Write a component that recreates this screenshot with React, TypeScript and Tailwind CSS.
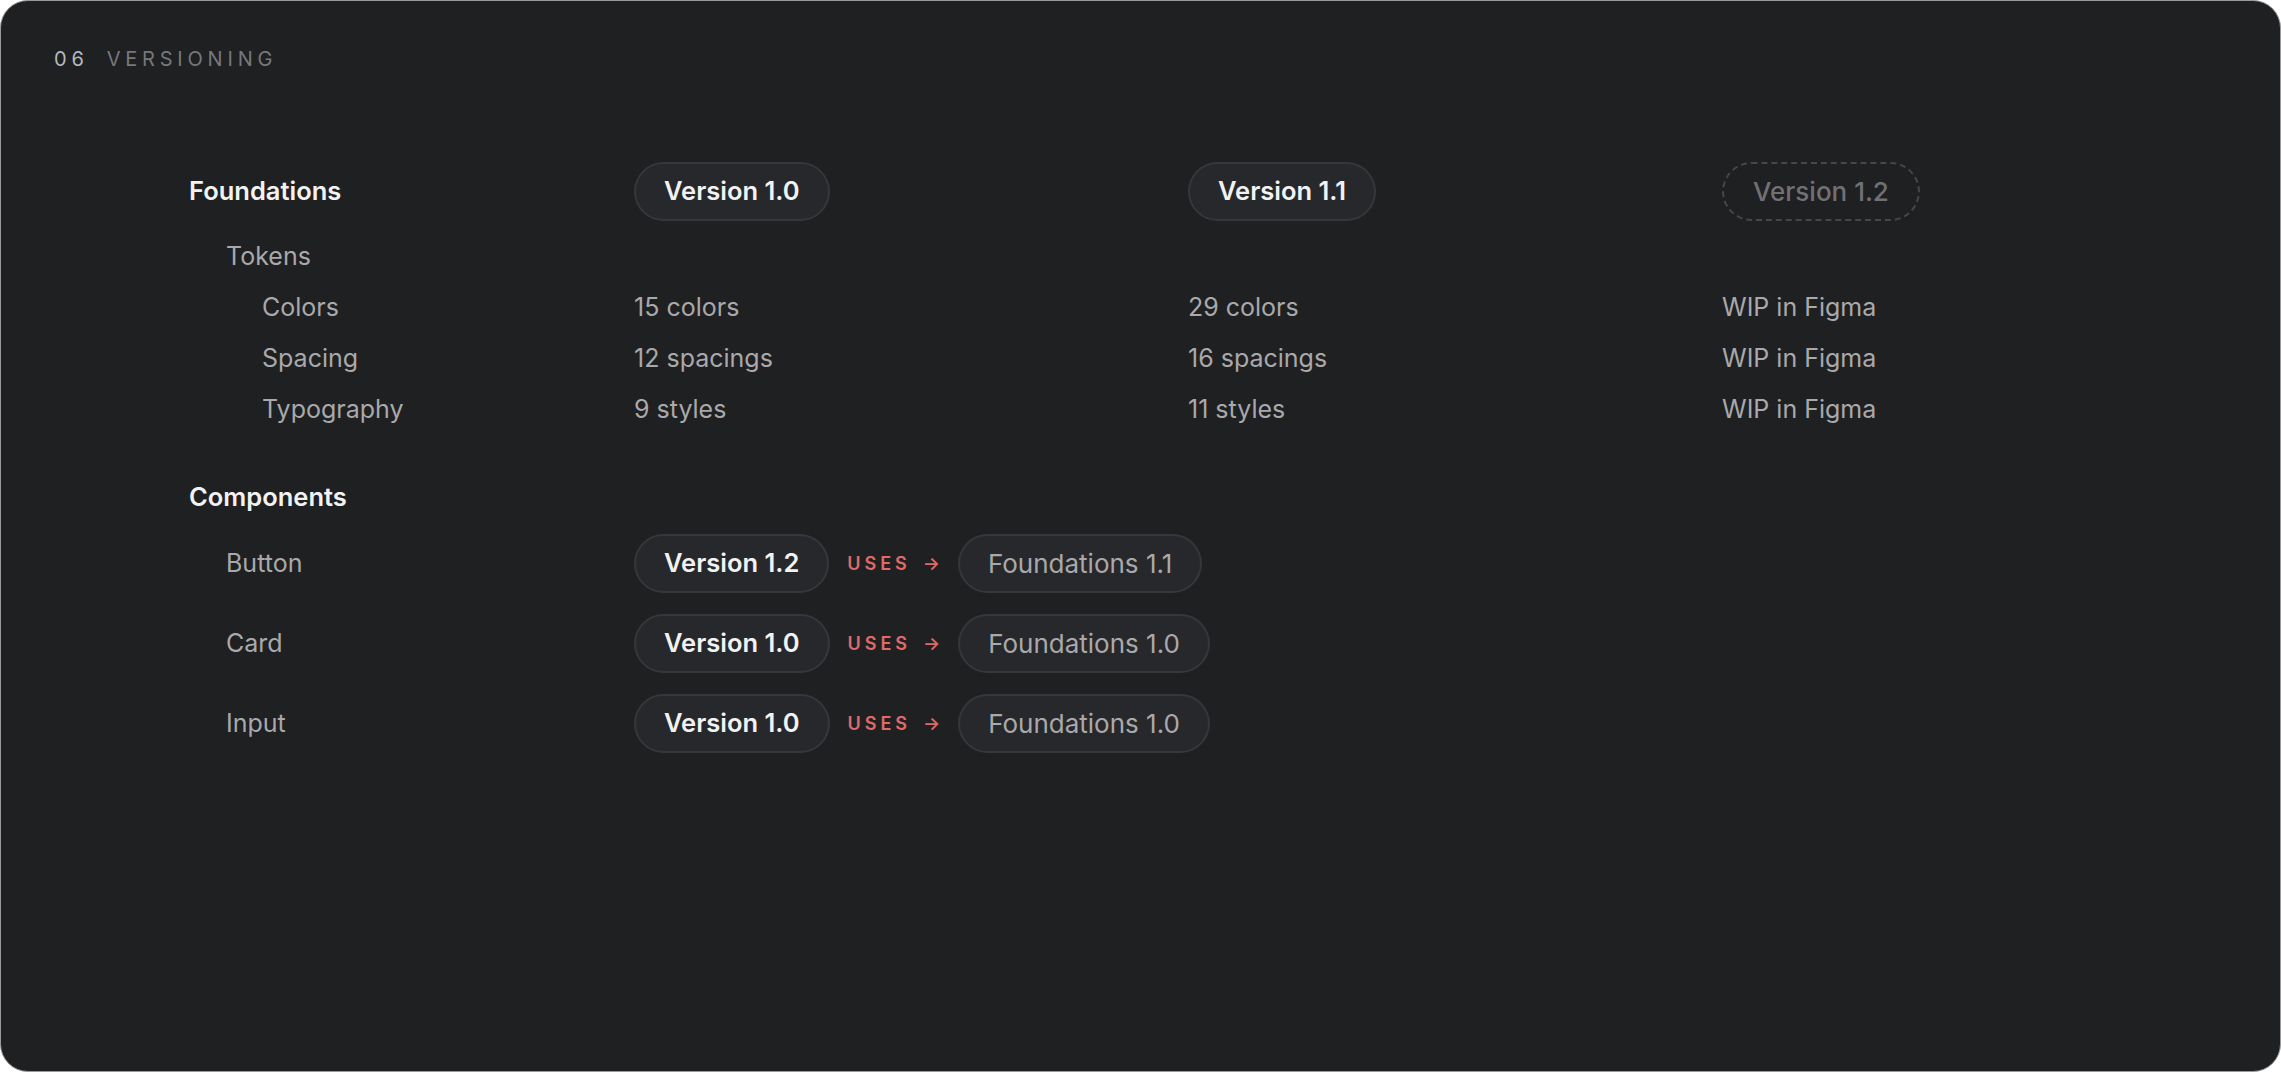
const font = { fontFamily: "Inter, 'Noto Sans', sans-serif" };

function Pill({ children, muted, dashed }: { children: React.ReactNode; muted?: boolean; dashed?: boolean }) {
    if (dashed) {
        return (
            <span className="inline-flex h-[59px] items-center rounded-full border-2 border-dashed border-[#46474b] px-[29px] text-[26px] font-medium text-[#707175]">
                {children}
            </span>
        );
    }
    return (
        <span className={`inline-flex h-[59px] items-center rounded-full border-2 border-[#36373a] bg-[#27282b] ${muted ? "px-[28px] text-[26px] text-[#a9a9ab]" : "px-[28px] text-[25.5px] font-semibold text-[#f2f2f2]"}`}>
            {children}
        </span>
    );
}

function Uses() {
    return (
        <span className="mx-[18px] flex items-center gap-[12px] text-[18px] font-semibold tracking-[0.22em] text-[#e06a6a]">
            USES <span className="tracking-normal text-[18px]">→</span>
        </span>
    );
}

const tokens = [
    { name: "Colors", v: ["15 colors", "29 colors", "WIP in Figma"] },
    { name: "Spacing", v: ["12 spacings", "16 spacings", "WIP in Figma"] },
    { name: "Typography", v: ["9 styles", "11 styles", "WIP in Figma"] },
];

const comps = [
    { name: "Button", ver: "Version 1.2", f: "Foundations 1.1" },
    { name: "Card", ver: "Version 1.0", f: "Foundations 1.0" },
    { name: "Input", ver: "Version 1.0", f: "Foundations 1.0" },
];

export default function App() {
    return (
        <div className="bg-white" style={font}>
            <div className="h-[1072px] rounded-[28px] border border-[#9a9a9a] bg-[#1f2022] pt-[44px]">
                <div className="ml-[53px] flex h-[28px] items-center gap-[18px] text-[20px] tracking-[0.24em]">
                    <span className="text-[#b8b8ba]">06</span>
                    <span className="text-[#77787c]">VERSIONING</span>
                </div>

                <div className="ml-[188px] mt-[89px]">
                    {/* Foundations */}
                    <div className="grid h-[59px] grid-cols-[445px_554px_534px_auto] items-center">
                        <span className="text-[25.5px] font-semibold text-[#f2f2f2]">Foundations</span>
                        <div><Pill>Version 1.0</Pill></div>
                        <div><Pill>Version 1.1</Pill></div>
                        <div><Pill dashed>Version 1.2</Pill></div>
                    </div>
                    <div className="mt-[10px] flex h-[51px] items-center pl-[37px] text-[25px] text-[#a9a9ab]">Tokens</div>
                    {tokens.map(t => (
                        <div key={t.name} className="grid h-[51px] grid-cols-[445px_554px_534px_auto] items-center text-[25px] text-[#a9a9ab]">
                            <span className="pl-[73px]">{t.name}</span>
                            {t.v.map((x, i) => <span key={i}>{x}</span>)}
                        </div>
                    ))}

                    {/* Components */}
                    <div className="mt-[33px] flex h-[59px] items-center text-[25.5px] font-semibold text-[#f2f2f2]">Components</div>
                    <div className="mt-[7px] flex flex-col gap-[21px]">
                        {comps.map(c => (
                            <div key={c.name} className="grid h-[59px] grid-cols-[445px_auto] items-center">
                                <span className="pl-[37px] text-[25px] text-[#a9a9ab]">{c.name}</span>
                                <div className="flex items-center">
                                    <Pill>{c.ver}</Pill>
                                    <Uses />
                                    <Pill muted>{c.f}</Pill>
                                </div>
                            </div>
                        ))}
                    </div>
                </div>
            </div>
        </div>
    );
}
